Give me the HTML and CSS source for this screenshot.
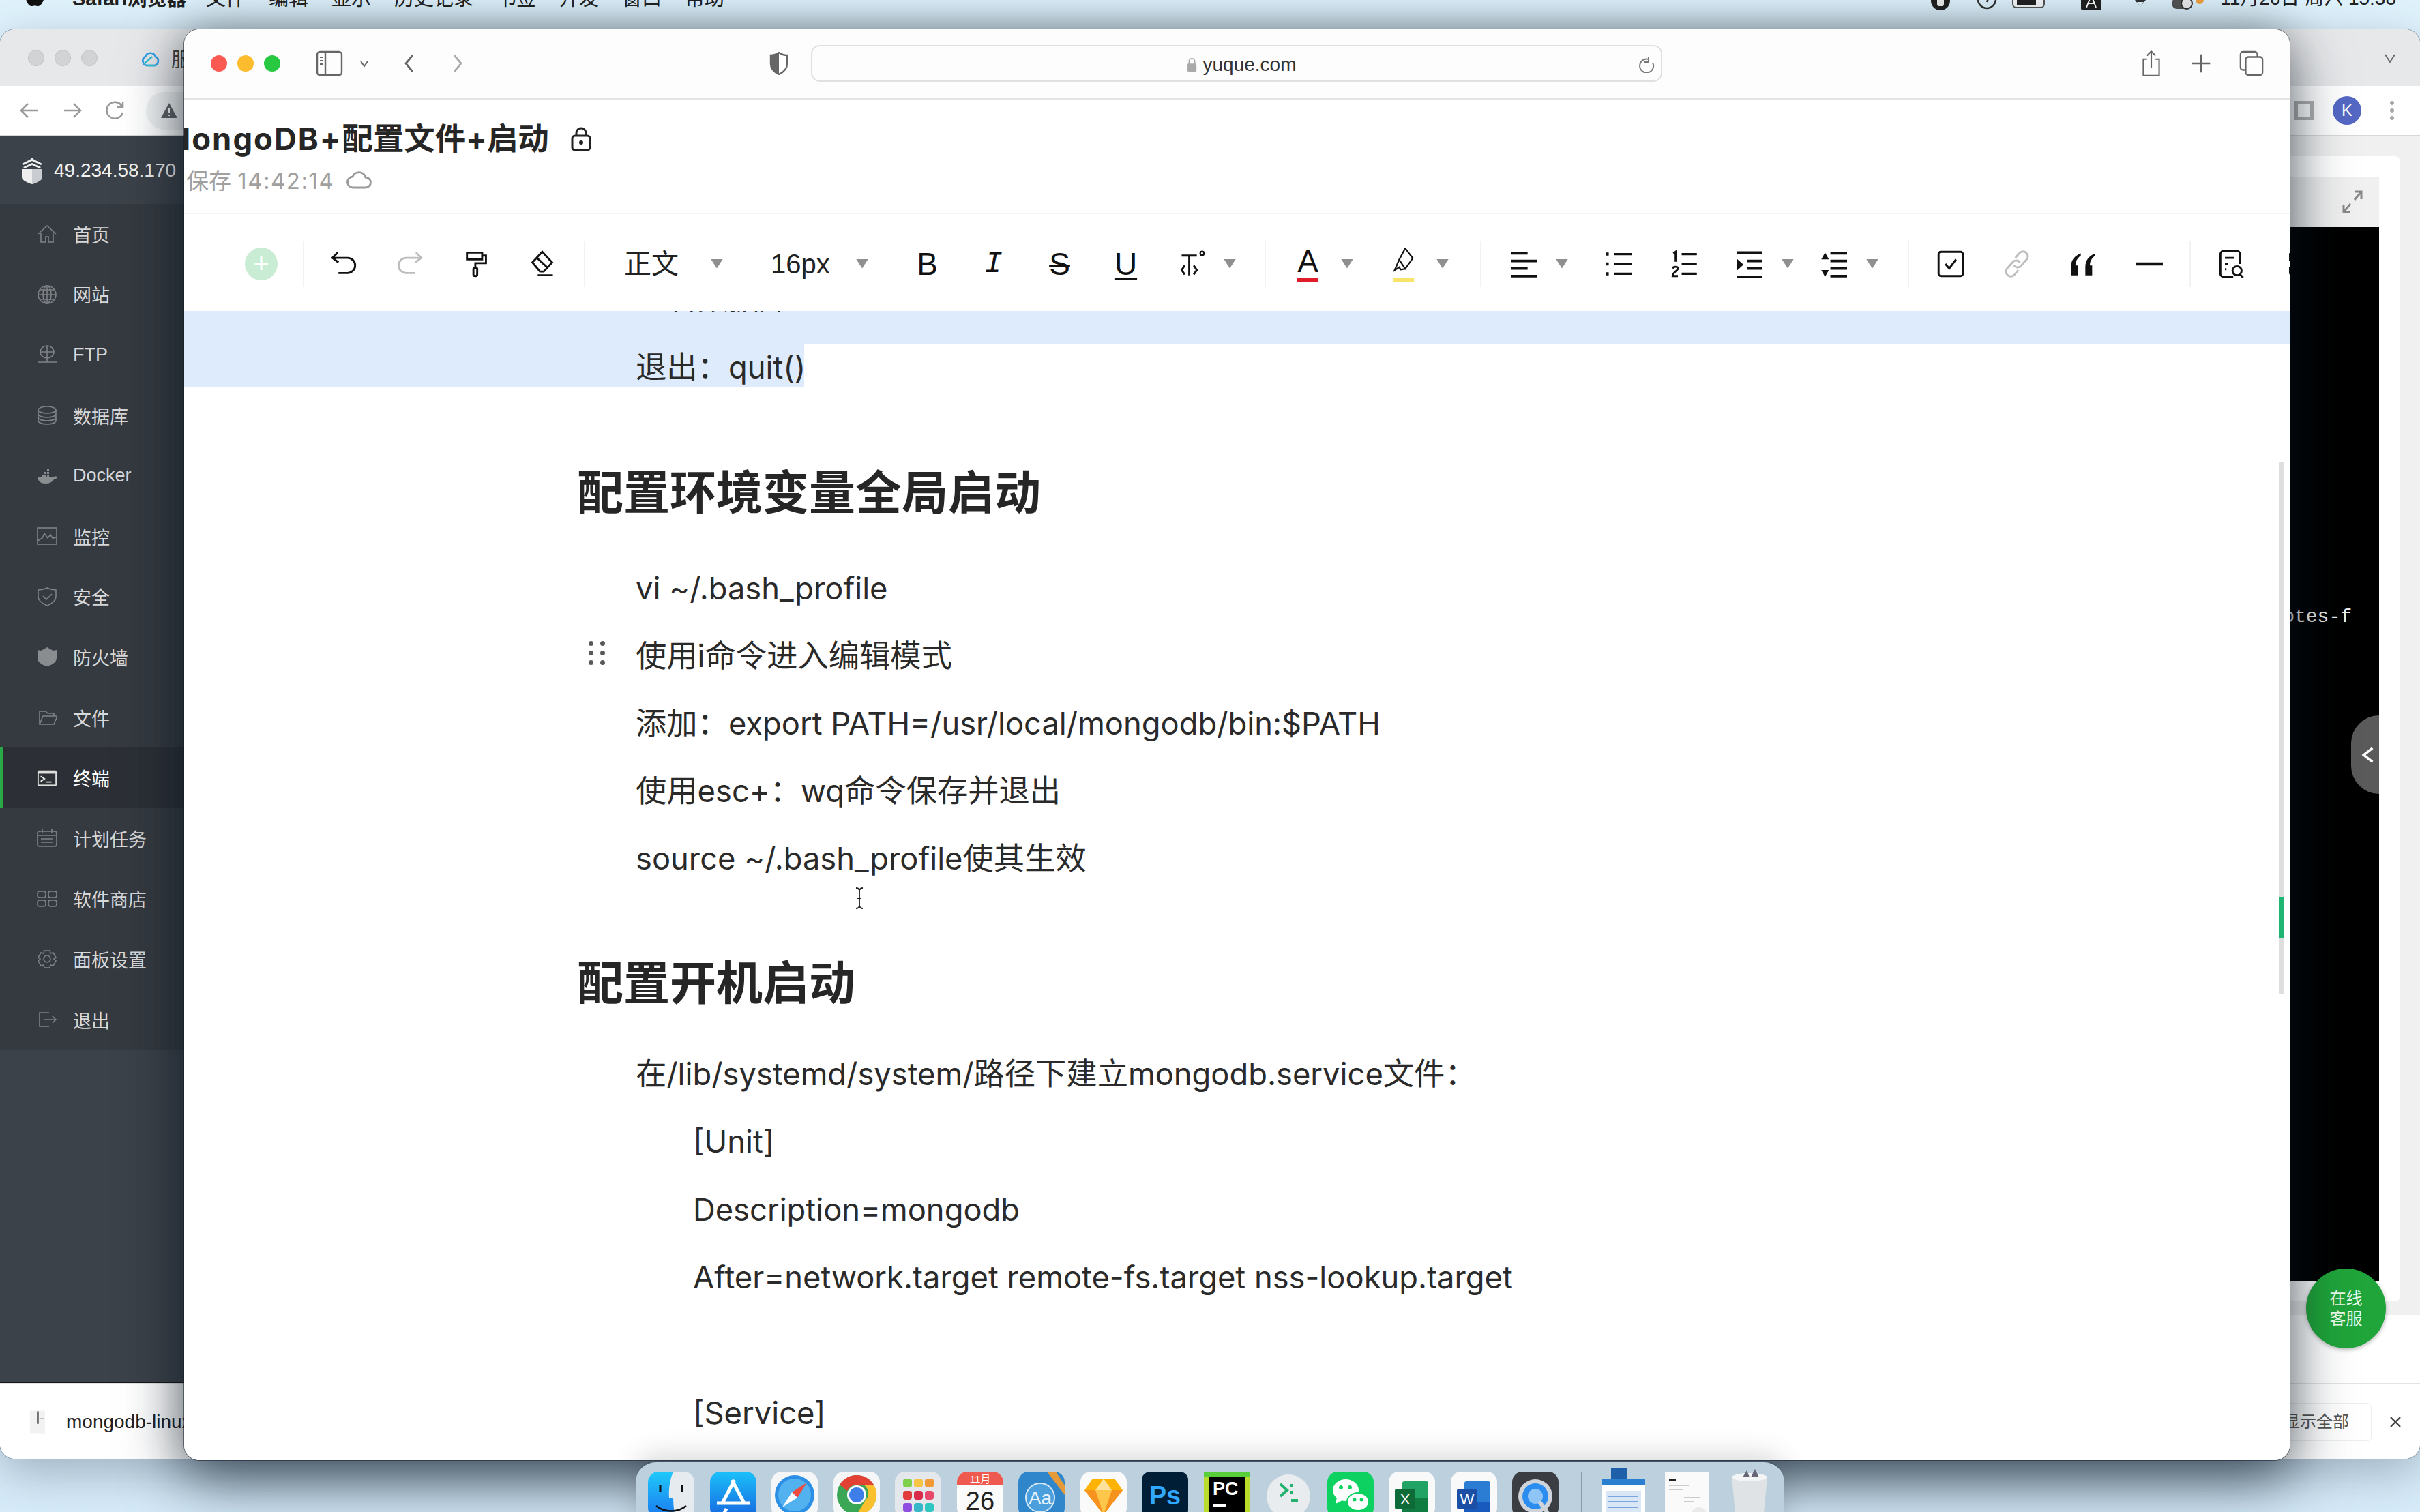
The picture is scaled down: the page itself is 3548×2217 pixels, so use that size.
FILE: index.html
```html
<!DOCTYPE html>
<html lang="zh-CN">
<head>
<meta charset="utf-8">
<title>MongoDB+配置文件+启动</title>
<link rel="stylesheet" href="styles.css">
</head>
<body>
<div class="desktop">

  <header class="menubar">
    <div class="menu-left">
      <svg class="apple" viewBox="0 0 36 40"><path d="M26 4c-3 0-6 2-7 5 3 0 6-2 7-5zM18 11c-2 0-4-1-7-1-5 0-9 4-9 11 0 8 5 17 10 17 2 0 4-1 6-1s4 1 6 1c4 0 8-6 10-12-4-2-6-5-6-8 0-3 2-5 4-6-2-2-5-3-7-3-3 0-5 2-7 2z"/></svg>
      <span class="menu-app">Safari浏览器</span>
      <span class="menu-item">文件</span>
      <span class="menu-item">编辑</span>
      <span class="menu-item">显示</span>
      <span class="menu-item">历史记录</span>
      <span class="menu-item">书签</span>
      <span class="menu-item">开发</span>
      <span class="menu-item">窗口</span>
      <span class="menu-item">帮助</span>
    </div>
    <div class="menu-right">
      <svg class="status" viewBox="0 0 36 36"><circle cx="18" cy="12" r="14" fill="#222"/><rect x="13" y="8" width="10" height="12" rx="3" fill="#eee"/></svg>
      <svg class="status st-2" viewBox="0 0 36 36"><circle cx="18" cy="10" r="13" fill="none" stroke="#333" stroke-width="2.500"/><path d="M18 14l5-12" stroke="#333" stroke-width="2.500"/></svg>
      <svg class="status wide st-3" viewBox="0 0 56 36"><rect x="2" y="-8" width="46" height="30" rx="5" fill="#f4f7f9" stroke="#555" stroke-width="2"/><rect x="8" y="-6" width="28" height="24" fill="#222"/></svg>
      <svg class="status st-4" viewBox="0 0 36 36"><rect x="4" y="-6" width="30" height="32" rx="3" fill="#222"/><path d="M12 22l7-18 7 18M14 16h10" stroke="#fff" fill="none" stroke-width="2"/></svg>
      <svg class="status st-5" viewBox="0 0 36 36"><path d="M18 21l-5-7h10zM6 6l12 15L30 6" fill="#333"/></svg>
      <svg class="status wider st-6" viewBox="0 0 50 36"><rect x="2" y="8" width="30" height="16" rx="8" fill="#555"/><circle cx="24" cy="16" r="8" fill="#eee" stroke="#333" stroke-width="2"/><circle cx="43" cy="11" r="6" fill="#f5a33d"/></svg>
      <span class="clock">11月26日 周六 15:38</span>
    </div>
  </header>

  <!-- back window: Chrome with the server panel -->
  <section class="win-back">
    <div class="tabbar">
      <span class="light-off"></span><span class="light-off"></span><span class="light-off"></span>
      <svg class="tab-cloud" viewBox="0 0 32 32"><path d="M11 27a7 7 0 0 1-2-13 8 8 0 0 1 15 0 7 7 0 0 1-1 13z" fill="none" stroke="#2f9fe8" stroke-width="2.6"/><path d="M7 25l12-11M12 27h12" fill="none" stroke="#2fc0d8" stroke-width="2.6"/></svg>
      <span class="tab-title">服务器</span>
      <svg class="tab-chevron" viewBox="0 0 20 20"><path d="M3 5l7 11 7-11" fill="none" stroke="#666" stroke-width="2"/></svg>
    </div>
    <div class="chrome-bar">
      <svg class="chrome-icon" viewBox="0 0 32 32"><path d="M28 16H4M14 6L4 16l10 10" fill="none" stroke="#9a9a9a" stroke-width="2.6"/></svg>
      <svg class="chrome-icon" viewBox="0 0 32 32"><path d="M4 16h24M18 6l10 10-10 10" fill="none" stroke="#9a9a9a" stroke-width="2.6"/></svg>
      <svg class="chrome-icon" viewBox="0 0 32 32"><path d="M26 10a12 12 0 1 0 1 9M27 3v8h-8" fill="none" stroke="#9a9a9a" stroke-width="2.6"/></svg>
      <div class="chrome-address">
        <svg class="warn" viewBox="0 0 26 26"><path d="M13 2l12 22H1z" fill="#5f6368"/><rect x="12" y="9" width="2" height="8" fill="#fff"/><rect x="12" y="19" width="2" height="2" fill="#fff"/></svg>
      </div>
      <svg class="chrome-square" viewBox="0 0 28 28"><rect x="2.500" y="2.500" width="23" height="23" fill="none" stroke="#b2b2b2" stroke-width="5"/></svg>
      <span class="avatar">K</span>
      <span class="chrome-dots"><i></i><i></i><i></i></span>
    </div>
    <div class="back-body">
      <nav class="sidebar">
        <div class="side-logo">
          <svg class="shield-logo" viewBox="0 0 34 40"><path d="M17 1l3 3 12 6-2 2-13-6-13 6-2-2 12-6zM17 9l13 6-2 2-11-5-11 5-2-2z" fill="#eee"/><path d="M2 18h30v12c0 4-8 8-15 10C10 38 2 34 2 30z" fill="#eee"/><path d="M17 18h15v12c0 4-8 8-15 10z" fill="#c9ccd0"/></svg>
          <span>49.234.58.170</span>
        </div>
        <ul class="side-menu">
          <li class="side-row"><svg class="side-icon" viewBox="0 0 30 30"><path d="M2 15L15 3l13 12M6 13v14h7v-8h4v8h7V13" /></svg><span>首页</span></li>
          <li class="side-row"><svg class="side-icon" viewBox="0 0 30 30"><circle cx="15" cy="15" r="13"/><ellipse cx="15" cy="15" rx="6" ry="13"/><path d="M2 15h26M4 8h22M4 22h22M15 2v26"/></svg><span>网站</span></li>
          <li class="side-row"><svg class="side-icon" viewBox="0 0 30 30"><ellipse cx="15" cy="11" rx="10" ry="9"/><path d="M5 11h20M15 2v18M1 26h28M15 20v6"/></svg><span>FTP</span></li>
          <li class="side-row"><svg class="side-icon" viewBox="0 0 30 30"><ellipse cx="15" cy="7" rx="13" ry="5"/><path d="M2 7v16c0 3 6 5 13 5s13-2 13-5V7M2 13c0 3 6 5 13 5s13-2 13-5M2 18c0 3 6 5 13 5s13-2 13-5"/></svg><span>数据库</span></li>
          <li class="side-row"><svg class="side-icon solid" viewBox="0 0 30 30"><path d="M1 17h22c2 0 3-1 3-2l4 1c-1 3-3 4-5 4-3 5-8 6-13 6-6 0-10-3-11-9z"/><path d="M7 13h3v3H7zM11 13h3v3h-3zM15 13h3v3h-3zM11 9h3v3h-3zM15 9h3v3h-3zM15 5h3v3h-3z"/></svg><span>Docker</span></li>
          <li class="side-row"><svg class="side-icon" viewBox="0 0 30 30"><rect x="1" y="3" width="28" height="24"/><path d="M1 22l7-4 3-7 5 7 4-5 3 5 6-1"/></svg><span>监控</span></li>
          <li class="side-row"><svg class="side-icon" viewBox="0 0 30 30"><path d="M2 5c5 0 9-1 13-3 4 2 8 3 13 3v10c0 6-6 10-13 13C8 25 2 21 2 15z"/><path d="M9 14l5 5 8-8"/></svg><span>安全</span></li>
          <li class="side-row"><svg class="side-icon solid" viewBox="0 0 30 30"><path d="M1 5l5 1 4-2 5-3 5 3 4 2 5-1v12c0 6-7 10-14 12C8 27 1 23 1 17z"/></svg><span>防火墙</span></li>
          <li class="side-row"><svg class="side-icon" viewBox="0 0 30 30"><path d="M4 25V6h9l3 3h9v4M4 25l5-12h21l-5 12z"/></svg><span>文件</span></li>
          <li class="side-row is-active"><svg class="side-icon active" viewBox="0 0 32 30"><rect x="1" y="3" width="30" height="24" rx="2" fill="#ddd" stroke="none"/><rect x="3" y="8" width="26" height="17" fill="#2e3237" stroke="none"/><path d="M6 12l6 4-6 4M14 21h9" stroke="#eee"/></svg><span>终端</span></li>
          <li class="side-row"><svg class="side-icon" viewBox="0 0 30 30"><rect x="1" y="5" width="28" height="22" rx="3"/><path d="M1 11h28M8 2v5M22 2v5M6 16h18M6 21h18"/></svg><span>计划任务</span></li>
          <li class="side-row"><svg class="side-icon" viewBox="0 0 30 30"><rect x="1" y="4" width="12" height="9" rx="3"/><rect x="17" y="4" width="12" height="9" rx="3"/><rect x="1" y="17" width="12" height="9" rx="3"/><rect x="17" y="17" width="12" height="9" rx="3"/></svg><span>软件商店</span></li>
          <li class="side-row"><svg class="side-icon" viewBox="0 0 30 30"><path d="M11 3h8l1 4 4-1 4 7-3 2 3 3-4 7-4-1-1 4h-8l-1-4-4 1-4-7 3-3-3-2 4-7 4 1z"/><circle cx="15" cy="15" r="5"/></svg><span>面板设置</span></li>
          <li class="side-row"><svg class="side-icon" viewBox="0 0 30 30"><path d="M18 5H4v20h14M10 15h18M23 10l5 5-5 5"/></svg><span>退出</span></li>
        </ul>
      </nav>
      <main class="panel-main">
        <div class="panel-area">
          <div class="panel">
            <div class="panel-head">
              <svg class="expand" viewBox="0 0 30 34"><path d="M18 2h10v11M28 2L18 14M12 32H2V21M2 32l10-12" fill="none" stroke="#888" stroke-width="3"/></svg>
            </div>
            <div class="terminal">
              <div class="term-line">otes-f</div>
              <div class="term-fold"><svg viewBox="0 0 24 30"><path d="M20 4L6 15l14 11" fill="none" stroke="#fff" stroke-width="4"/></svg></div>
            </div>
          </div>
        </div>
        <div class="panel-foot"></div>
      </main>
    </div>
    <div class="download-bar">
      <div class="dl-file">
        <svg class="zip" viewBox="0 0 24 36"><path d="M0 0h24v36H0z" fill="#f2f2f2"/><path d="M11 1h3v20h-3z" fill="#666"/><path d="M15 12h7" stroke="#bbb"/></svg>
        <span>mongodb-linux-x86_64</span>
      </div>
      <div class="dl-actions">
        <span class="dl-all">显示全部</span>
        <svg class="dl-close" viewBox="0 0 20 20"><path d="M3 3l14 14M17 3L3 17" stroke="#444" stroke-width="2.400"/></svg>
      </div>
    </div>
    <button class="chat-btn">在线<br>客服</button>
  </section>

  <!-- front window: Safari with the Yuque editor -->
  <section class="win-front">
    <div class="safari-bar">
      <span class="light red"></span><span class="light yellow"></span><span class="light green"></span>
      <svg class="sf-sidebar" viewBox="0 0 40 40"><rect x="2" y="3" width="36" height="34" rx="4" fill="none" stroke="#666" stroke-width="2.400"/><path d="M14 3v34" stroke="#666" stroke-width="2.400"/><path d="M6 11h4M6 16h4M6 21h4" stroke="#666" stroke-width="2"/></svg>
      <svg class="sf-caret" viewBox="0 0 16 16"><path d="M3 5l5 7 5-7" fill="none" stroke="#666" stroke-width="2"/></svg>
      <svg class="sf-nav" viewBox="0 0 20 30"><path d="M15 3L5 15l10 12" fill="none" stroke="#666" stroke-width="2.800"/></svg>
      <svg class="sf-nav next" viewBox="0 0 20 30"><path d="M5 3l10 12L5 27" fill="none" stroke="#aaa" stroke-width="2.800"/></svg>
      <svg class="sf-shield" viewBox="0 0 28 34"><path d="M14 1c4 3 8 4 12 4v13c0 7-6 12-12 15C8 30 2 25 2 18V5c4 0 8-1 12-4z" fill="#fff" stroke="#666" stroke-width="2.400"/><path d="M14 1C10 4 6 5 2 5v13c0 7 6 12 12 15z" fill="#666"/></svg>
      <div class="sf-address">
        <div class="sf-url">
          <svg class="sf-lock" viewBox="0 0 18 26"><path d="M4 12V7a5 5 0 0 1 10 0v5" fill="none" stroke="#aaa" stroke-width="2"/><rect x="1" y="11" width="16" height="14" rx="2" fill="#aaa"/></svg>
          <span>yuque.com</span>
        </div>
        <svg class="sf-reload" viewBox="0 0 26 26"><path d="M21 9a10 10 0 1 1-6-5M15 0v8h-6" transform="translate(1 2)" fill="none" stroke="#777" stroke-width="2"/></svg>
      </div>
      <svg class="sf-act act-share" viewBox="0 0 36 44"><path d="M11 15H5v27h26V15h-6M18 30V3M11 9l7-7 7 7" fill="none" stroke="#666" stroke-width="2.400"/></svg>
      <svg class="sf-act act-plus" viewBox="0 0 36 36"><path d="M18 3v30M3 18h30" stroke="#666" stroke-width="2.600"/></svg>
      <svg class="sf-act act-tabs" viewBox="0 0 40 40"><rect x="3" y="2" width="26" height="28" rx="4" fill="none" stroke="#666" stroke-width="2.400"/><rect x="11" y="10" width="26" height="28" rx="4" fill="#fdfdfe" stroke="#666" stroke-width="2.400"/></svg>
    </div>

    <div class="doc-head">
      <div class="doc-title">
        <h1><span class="title-latin">MongoDB+</span>配置文件+启动</h1>
        <svg class="doc-lock" viewBox="0 0 30 36"><rect x="2" y="13" width="26" height="21" rx="4" fill="none" stroke="#222" stroke-width="3"/><path d="M8 13V9a7 7 0 0 1 14 0v4" fill="none" stroke="#222" stroke-width="3"/><circle cx="15" cy="23" r="3" fill="#222"/></svg>
      </div>
      <div class="doc-save">
        <span>保存 <span class="save-time">14:42:14</span></span>
        <svg class="doc-cloud" viewBox="0 0 38 30"><path d="M10 27a8 8 0 0 1-1-16 10 10 0 0 1 19 1 7.500 7.500 0 0 1 0 15z" fill="none" stroke="#999" stroke-width="2.800"/></svg>
      </div>
    </div>

    <div class="toolbar">
      <span class="tb-plus ml-89">+</span>
      <i class="tb-sep ml-37"></i>
      <span class="tb-btn ml-9"><svg viewBox="0 0 36 36"><path d="M10 3L3 10l8 6M3 10h20a9 9 0 0 1 0 20H11"/></svg></span>
      <span class="tb-btn off"><svg viewBox="0 0 36 36"><path d="M26 3l7 7-8 6M33 10H13a9 9 0 0 0 0 20h12"/></svg></span>
      <span class="tb-btn"><svg viewBox="0 0 36 36"><path d="M6 3h20v9H6zM26 7h5v10H17v6"/><rect x="14.500" y="23" width="5" height="11" rx="2"/></svg></span>
      <span class="tb-btn"><svg viewBox="0 0 36 36"><path d="M18 2l13 14-11 12h-5L5 16zM11 10l14 13M12 33h20"/></svg></span>
      <i class="tb-sep ml-13"></i>
      <span class="tb-select sel-style ml-57">正文</span><i class="tb-caret ml-47"></i>
      <span class="tb-select sel-size ml-70">16px</span><i class="tb-caret ml-36"></i>
      <span class="tb-btn tb-letter ml-38">B</span>
      <span class="tb-btn tb-letter tb-i">I</span>
      <span class="tb-btn tb-letter tb-s">S</span>
      <span class="tb-btn tb-letter tb-u">U</span>
      <span class="tb-btn"><svg viewBox="0 0 36 36"><path d="M4 7h20M14 7v26M8 20l-4 6 4 6M20 20l4 6-4 6"/><circle cx="31" cy="4" r="2.500" stroke-width="2"/></svg></span>
      <i class="tb-caret ml-n2"></i>
      <i class="tb-sep ml-42"></i>
      <span class="tb-btn tb-color ml-13"><span class="tb-a">A</span><i class="swatch red-swatch"></i></span><i class="tb-caret"></i>
      <span class="tb-btn ml-25 tb-color"><svg viewBox="0 0 36 36"><path d="M20 1l10 13-10 14-8-12zM12 16l-6 14 6-4 2 3 6-1"/></svg><i class="swatch yellow-swatch"></i></span><i class="tb-caret"></i>
      <i class="tb-sep ml-46"></i>
      <span class="tb-btn ml-12"><svg viewBox="0 0 36 36"><path d="M2 4h22M2 14h34M2 24h22M2 34h34" stroke-width="3.400"/></svg></span><i class="tb-caret"></i>
      <span class="tb-btn ml-25"><svg viewBox="0 0 36 36"><path d="M12 5h24M12 18h24M12 31h24" stroke-width="3"/><path d="M1 5h4M1 18h4M1 31h4" stroke-width="4"/></svg></span>
      <span class="tb-btn"><svg viewBox="0 0 36 36"><path d="M14 5h20M14 18h20M14 31h20" stroke-width="3"/><path d="M3 4l3-2v13M2 24c1-3 7-3 7 0s-7 5-7 10h7" stroke-width="2.600"/></svg></span>
      <span class="tb-btn ml-n3"><svg viewBox="0 0 36 36"><path d="M2 3h34M16 14h20M16 24h20M2 35h34" stroke-width="3.400"/><path d="M2 11l9 8-9 8z" fill="#111" stroke="none"/></svg></span><i class="tb-caret"></i>
      <span class="tb-btn ml-9"><svg viewBox="0 0 36 36"><path d="M14 4h22M14 14h22M14 24h22M14 34h22" stroke-width="3.400"/><path d="M2 12l5-9 5 9zM2 26l5 9 5-9z" fill="#111" stroke="none"/></svg></span><i class="tb-caret"></i>
      <i class="tb-sep ml-43"></i>
      <span class="tb-btn ml-12"><svg viewBox="0 0 36 36"><rect x="2" y="2" width="32" height="32" rx="3"/><path d="M11 18l5 6 9-12"/></svg></span>
      <span class="tb-btn off"><svg viewBox="0 0 36 36"><path d="M16 10l5-6a6 6 0 0 1 10 8l-8 9a6 6 0 0 1-9-1M20 26l-5 6a6 6 0 0 1-10-8l8-9a6 6 0 0 1 9 1"/></svg></span>
      <span class="tb-btn"><svg viewBox="0 0 36 36"><path d="M15 4C7 7 2 13 2 22v11h9V20H8c0-6 3-10 7-13zM34 4c-8 3-13 9-13 18v11h9V20h-3c0-6 3-10 7-13z" fill="#111" stroke="none"/></svg></span>
      <span class="tb-btn"><svg viewBox="0 0 36 36"><path d="M0 18h36" stroke-width="4"/></svg></span>
      <i class="tb-sep ml-11"></i>
      <span class="tb-btn ml-11"><svg viewBox="0 0 36 36"><path d="M20 35H7a4 4 0 0 1-4-4V5a4 4 0 0 1 4-4h18a4 4 0 0 1 4 4v13M9 10h12M9 18h4M9 25h2"/><circle cx="25" cy="27" r="6"/><path d="M29 32l4 4"/></svg></span>
      <span class="tb-clip"><svg viewBox="0 0 36 36"><path d="M7 3h30M7 3v10h10M7 22v8a4 4 0 0 0 4 4"/></svg></span>
    </div>

    <div class="doc-body">
      <div class="sel-prev"><p class="line">查看数据库</p></div>
      <p class="line sel-row">退出：quit()</p>

      <h2 class="heading first-h">配置环境变量全局启动</h2>
      <p class="line">vi ~/.bash_profile</p>
      <p class="line">使用i命令进入编辑模式</p>
      <p class="line">添加：export PATH=/usr/local/mongodb/bin:$PATH</p>
      <p class="line">使用esc+：wq命令保存并退出</p>
      <p class="line">source ~/.bash_profile使其生效</p>

      <h2 class="heading second-h">配置开机启动</h2>
      <p class="line tall">在/lib/systemd/system/路径下建立mongodb.service文件：</p>
      <p class="line tall indent">[Unit]</p>
      <p class="line tall indent">Description=mongodb</p>
      <p class="line tall indent">After=network.target remote-fs.target nss-lookup.target</p>
      <p class="line tall indent">&nbsp;</p>
      <p class="line tall indent">[Service]</p>

      <div class="drag-handle"><i></i><i></i><i></i><i></i><i></i><i></i></div>
      <svg class="ibeam" viewBox="0 0 14 32"><path d="M2 1c2 0 4 1 5 3 1-2 3-3 5-3M7 4v24M2 31c2 0 4-1 5-3 1 2 3 3 5 3M4 16h6" fill="none" stroke="#222" stroke-width="1.800"/></svg>
    </div>
    <div class="scroll-track"><i class="scroll-mark"></i></div>
  </section>

  <!-- dock -->
  <footer class="dock">
    <svg class="dock-icon" viewBox="0 0 68 68"><defs><linearGradient id="fd" x1="0" y1="0" x2="0" y2="1"><stop offset="0" stop-color="#20c9fb"/><stop offset="1" stop-color="#1a78ee"/></linearGradient></defs><rect width="68" height="68" rx="15" fill="#e6ebf0"/><path d="M15 0h22c-5 12-7 25-6 38h6c0 10 1 20 3 30H15A15 15 0 0 1 0 53V15A15 15 0 0 1 15 0z" fill="url(#fd)"/><path d="M18 20v9M50 20v9" stroke="#111" stroke-width="3"/><path d="M12 50c12 10 32 10 44 0" fill="none" stroke="#111" stroke-width="2.500"/></svg>
    <svg class="dock-icon" viewBox="0 0 68 68"><defs><linearGradient id="as" x1="0" y1="0" x2="0" y2="1"><stop offset="0" stop-color="#1cc0fa"/><stop offset="1" stop-color="#1666e0"/></linearGradient></defs><rect width="68" height="68" rx="15" fill="url(#as)"/><path d="M36 12L18 46M32 12l18 34M10 46h48M24 54l-4 8" stroke="#fff" stroke-width="5" fill="none"/></svg>
    <svg class="dock-icon" viewBox="0 0 68 68"><rect width="68" height="68" rx="15" fill="#f5f6f8"/><circle cx="34" cy="34" r="29" fill="#2b8fe6"/><circle cx="34" cy="34" r="24" fill="#52b2f0"/><path d="M52 16L30 30l8 8z" fill="#f04a3e"/><path d="M16 52l14-22 8 8z" fill="#fff"/></svg>
    <svg class="dock-icon" viewBox="0 0 68 68"><rect width="68" height="68" rx="15" fill="#f5f6f8"/><circle cx="34" cy="34" r="29" fill="#3aa757"/><path d="M34 5a29 29 0 0 1 25 14H34a15 15 0 0 0-14 9L9 19A29 29 0 0 1 34 5z" fill="#e34133"/><path d="M59 19a29 29 0 0 1-25 44l12-20a15 15 0 0 0-2-24z" fill="#fbc02d"/><circle cx="34" cy="34" r="14" fill="#fff"/><circle cx="34" cy="34" r="11" fill="#3f7ee8"/></svg>
    <svg class="dock-icon" viewBox="0 0 68 68"><rect width="68" height="68" rx="15" fill="#e4e8ec"/><rect x="12" y="10" width="13" height="13" rx="4" fill="#7ed04b"/><rect x="28" y="10" width="13" height="13" rx="4" fill="#f6c545"/><rect x="44" y="10" width="13" height="13" rx="4" fill="#f19a38"/><rect x="12" y="28" width="13" height="13" rx="4" fill="#e23b3b"/><rect x="28" y="28" width="13" height="13" rx="4" fill="#d82c4a"/><rect x="44" y="28" width="13" height="13" rx="4" fill="#e8486a"/><rect x="12" y="46" width="13" height="13" rx="4" fill="#8e4ee0"/><rect x="28" y="46" width="13" height="13" rx="4" fill="#35b7c9"/><rect x="44" y="46" width="13" height="13" rx="4" fill="#2fc7c0"/></svg>
    <svg class="dock-icon" viewBox="0 0 68 68"><rect width="68" height="68" rx="15" fill="#fbfbfb"/><path d="M0 20V15A15 15 0 0 1 15 0h38a15 15 0 0 1 15 15v5z" fill="#ef5a50"/><text class="dock-text" x="34" y="16" text-anchor="middle" font-size="15" fill="#fff">11月</text><text class="dock-text" x="34" y="56" text-anchor="middle" font-size="38" fill="#222">26</text></svg>
    <svg class="dock-icon" viewBox="0 0 68 68"><rect width="68" height="68" rx="15" fill="#2f86cb"/><path d="M42 0h13l13 20v14z" fill="#e69a3a"/><circle cx="32" cy="38" r="21" fill="#4b9fdc" stroke="#d5e8f5" stroke-width="2"/><text class="dock-text" x="32" y="48" text-anchor="middle" font-size="28" fill="#e8f3fb">Aa</text></svg>
    <svg class="dock-icon" viewBox="0 0 68 68"><rect width="68" height="68" rx="15" fill="#fafafa"/><path d="M18 10h32l12 17-28 36L6 27z" fill="#fdb300"/><path d="M6 27h56L34 63z" fill="#f6921e"/><path d="M22 27h24L34 63z" fill="#fdc74c"/><path d="M34 10l-12 17h24z" fill="#fee19a"/></svg>
    <svg class="dock-icon" viewBox="0 0 68 68"><rect width="68" height="68" rx="12" fill="#001e36"/><text class="dock-text strong" x="34" y="48" text-anchor="middle" font-size="38" fill="#31a8ff">Ps</text></svg>
    <svg class="dock-icon" viewBox="0 0 68 68"><rect width="68" height="68" fill="#b9dc2c"/><path d="M0 0h68v8H0z" fill="#58cf3a"/><rect x="7" y="7" width="54" height="54" fill="#000"/><text class="dock-text strong" x="13" y="34" font-size="27" fill="#fff">PC</text><rect x="13" y="48" width="20" height="4" fill="#fff"/></svg>
    <svg class="dock-icon" viewBox="0 0 68 68"><circle cx="34" cy="36" r="32" fill="#e9ecee"/><path d="M22 18l10 9-10 9M38 42h10M38 18v4M38 28v4" fill="none" stroke="#23b26d" stroke-width="4"/></svg>
    <svg class="dock-icon" viewBox="0 0 68 68"><rect width="68" height="68" rx="15" fill="#0dd161"/><ellipse cx="27" cy="27" rx="19" ry="16" fill="#fff"/><path d="M14 38l-2 9 10-5z" fill="#fff"/><ellipse cx="45" cy="44" rx="16" ry="13" fill="#fff" stroke="#0dd161" stroke-width="2"/><circle cx="20" cy="23" r="3" fill="#0dd161"/><circle cx="33" cy="23" r="3" fill="#0dd161"/><circle cx="40" cy="41" r="2.500" fill="#0dd161"/><circle cx="50" cy="41" r="2.500" fill="#0dd161"/></svg>
    <svg class="dock-icon" viewBox="0 0 68 68"><rect width="68" height="68" rx="15" fill="#f9f9f9"/><rect x="20" y="14" width="38" height="50" rx="3" fill="#21a366"/><path d="M20 38h38v26H20z" fill="#107c41"/><rect x="9" y="25" width="30" height="30" rx="3" fill="#0e6b37"/><text class="dock-text" x="24" y="48" text-anchor="middle" font-size="22" fill="#fff">X</text></svg>
    <svg class="dock-icon" viewBox="0 0 68 68"><rect width="68" height="68" rx="15" fill="#f9f9f9"/><rect x="20" y="14" width="38" height="50" rx="3" fill="#2b7cd3"/><path d="M20 44h38v20H20z" fill="#185abd"/><rect x="9" y="25" width="30" height="30" rx="3" fill="#1a4fa5"/><text class="dock-text" x="24" y="48" text-anchor="middle" font-size="22" fill="#fff">W</text></svg>
    <svg class="dock-icon" viewBox="0 0 68 68"><rect width="68" height="68" rx="15" fill="#3a3d42"/><circle cx="34" cy="36" r="25" fill="#cfd4da"/><circle cx="34" cy="36" r="19" fill="#2b8df0"/><circle cx="34" cy="36" r="11" fill="#8fc4f6"/><path d="M40 44l12 16" stroke="#cfd4da" stroke-width="6"/></svg>
    <i class="dock-sep"></i>
    <svg class="dock-doc doc-a" viewBox="0 0 68 76"><path d="M16 0h24v16H16z" fill="#1d5fa8"/><path d="M2 16h64v14H2z" fill="#2a7fd0"/><rect x="2" y="26" width="64" height="50" fill="#fff"/><rect x="8" y="34" width="52" height="42" fill="#d8e6f6"/><path d="M12 42h44M12 50h44M12 58h44" stroke="#7aa6dc" stroke-width="2"/></svg>
    <svg class="dock-doc doc-b" viewBox="0 0 68 76"><rect x="2" y="6" width="64" height="70" fill="#fafafa"/><path d="M8 18h10" stroke="#222" stroke-width="3"/><path d="M8 26h30M8 32h20M30 44h24M30 50h14" stroke="#ccc" stroke-width="2"/><circle cx="52" cy="70" r="12" fill="#eaeaea"/></svg>
    <svg class="dock-doc doc-c" viewBox="0 0 68 76"><path d="M8 14h52l-6 62H14z" fill="#dfe3e6"/><ellipse cx="34" cy="14" rx="26" ry="6" fill="#f2f4f5"/><path d="M24 14l6-10 4 10M36 14l6-12 6 12" fill="#667"/></svg>
  </footer>
</div>
</body>
</html>
```
FILE: styles.css
```css
* { box-sizing: border-box; }
html, body { margin: 0; padding: 0; }
body {
  width: 3548px;
  height: 2217px;
  overflow: hidden;
  font-family: "Liberation Sans", "Noto Sans CJK SC", sans-serif;
  background: #dceefb;
}
.desktop {
  position: relative;
  width: 3548px;
  height: 2217px;
  overflow: hidden;
  background: linear-gradient(#e0f3fd 0, #e0f3fd 60%, #d8ecfa 100%);
}
i { display: block; font-style: normal; }
svg { display: block; flex: none; }

/* menu bar */
.menubar {
  height: 42px;
  display: flex;
  justify-content: space-between;
  font-size: 29px;
  line-height: 30px;
  color: #222;
}
.menu-left, .menu-right { display: flex; align-items: flex-start; margin-top: -17px; }
.menu-left { padding-left: 36px; }
.apple { width: 30px; height: 34px; margin-top: -6px; fill: #111; }
.menu-app { margin-left: 40px; font-weight: 700; width: 196px; }
.menu-item { margin-right: 34px; }
.menu-right { padding-right: 35px; }
.status { width: 44px; height: 36px; margin-top: 6px; }
.status.wide { width: 56px; }
.status.wider { width: 50px; }
.st-2 { margin-left: 24px; }
.st-3 { margin-left: 14px; }
.st-4 { margin-left: 38px; }
.st-5 { margin-left: 29px; }
.st-6 { margin-left: 22px; }
.clock { margin-left: 23px; font-size: 28px; }

/* back window */
.win-back {
  position: absolute;
  left: 0;
  top: 43px;
  width: 3548px;
  height: 2096px;
  border-radius: 22px;
  overflow: hidden;
  display: flex;
  flex-direction: column;
  background: #fff;
  box-shadow: 0 0 0 1px rgba(90,110,125,.55), 0 20px 70px rgba(40,60,80,.35);
}
.tabbar {
  height: 83px;
  background: #e7e8ea;
  display: flex;
  align-items: center;
  padding-left: 41px;
  gap: 15px;
  flex: none;
}
.light-off { width: 24px; height: 24px; border-radius: 50%; background: #d2d3d5; border: 1px solid #c2c3c5; }
.tab-cloud { width: 32px; height: 32px; margin-left: 46px; }
.tab-title { font-size: 29px; color: #444; }
.tab-chevron { width: 20px; height: 20px; margin-left: auto; margin-right: 34px; }
.chrome-bar {
  height: 74px;
  flex: none;
  background: #fff;
  display: flex;
  align-items: center;
  padding-left: 27px;
  padding-right: 38px;
  gap: 31px;
  border-bottom: 2px solid #d8d8d8;
}
.chrome-icon { width: 32px; height: 32px; }
.chrome-address {
  flex: 1;
  height: 55px;
  margin-left: -2px;
  border-radius: 28px;
  background: #f1f3f4;
  display: flex;
  align-items: center;
  padding-left: 21px;
}
.warn { width: 26px; height: 26px; }
.chrome-square { width: 28px; height: 28px; }
.avatar {
  width: 42px;
  height: 42px;
  border-radius: 50%;
  background: #5468c4;
  color: #fff;
  font-size: 24px;
  text-align: center;
  line-height: 42px;
  margin-left: -3px;
}
.chrome-dots { display: flex; flex-direction: column; gap: 5px; margin-left: 11px; }
.chrome-dots i { width: 6px; height: 6px; border-radius: 50%; background: #a8a8a8; }

.back-body { flex: 1; display: flex; min-height: 0; }
.sidebar {
  width: 270px;
  flex: none;
  background: #3c4249;
  border-bottom: 2px solid #15181b;
  border-top: 1px solid #15181b;
  margin-top: -1px;
}
.side-logo {
  height: 99px;
  display: flex;
  align-items: center;
  padding-left: 30px;
  gap: 15px;
  color: #f1f1f1;
  font-size: 28px;
}
.shield-logo { width: 34px; height: 40px; }
.side-menu { margin: 0; padding: 0; list-style: none; background: #353a40; }
.side-row {
  height: 88.6px;
  display: flex;
  align-items: center;
  padding-left: 54px;
  gap: 23px;
  color: #d5d7d9;
  font-size: 27px;
}
.side-row.is-active {
  background: #2c3036;
  color: #fff;
  box-shadow: inset 5px 0 0 #28a745;
}
.side-icon { width: 30px; height: 30px; fill: none; stroke: #7f8387; stroke-width: 1.600; }
.side-icon.solid { fill: #8a8d90; stroke: none; }
.side-icon.active { stroke-width: 2; }

.panel-main { flex: 1; display: flex; flex-direction: column; min-width: 0; }
.panel-area { flex: 1; background: #f0f0f0; padding: 29px 30px 20px 0; display: flex; min-height: 0; }
.panel {
  flex: 1;
  background: #fff;
  border-radius: 6px;
  padding: 30px 30px 30px 0;
  display: flex;
  flex-direction: column;
}
.panel-head {
  height: 74px;
  background: #f0f0f0;
  display: flex;
  align-items: center;
  justify-content: flex-end;
  padding-right: 24px;
  flex: none;
}
.expand { width: 30px; height: 34px; }
.terminal { flex: 1; background: #000; position: relative; overflow: hidden; }
.term-line {
  position: absolute;
  right: 40px;
  top: 556px;
  font-family: "Liberation Mono", monospace;
  font-size: 28px;
  line-height: 32px;
  color: #eee;
}
.term-fold {
  position: absolute;
  right: 0;
  top: 716px;
  width: 41px;
  height: 115px;
  background: #5a5a5a;
  border-radius: 58px 0 0 58px / 58px 0 0 58px;
  display: flex;
  align-items: center;
  justify-content: flex-end;
  padding-right: 6px;
}
.term-fold svg { width: 22px; height: 28px; }
.panel-foot { height: 100px; background: #fff; flex: none; }

.download-bar {
  height: 111px;
  flex: none;
  background: #fff;
  border-top: 2px solid #e4e4e4;
  display: flex;
  align-items: center;
  justify-content: space-between;
  padding: 0 26px 0 44px;
}
.dl-file { display: flex; align-items: center; gap: 31px; font-size: 28px; color: #222; }
.zip { width: 22px; height: 34px; }
.dl-actions { display: flex; align-items: center; gap: 25px; }
.dl-all {
  font-size: 24px;
  color: #555;
  height: 56px;
  line-height: 54px;
  padding: 0 32px 0 30px;
  border: 1px solid #eee;
  border-radius: 6px;
}
.dl-close { width: 20px; height: 20px; }
.chat-btn {
  position: absolute;
  left: 3381px;
  top: 1817px;
  width: 117px;
  height: 117px;
  border: 0;
  border-radius: 50%;
  background: #20a53a;
  color: #eafbe9;
  font-family: inherit;
  font-size: 24px;
  line-height: 30px;
  padding: 0;
  box-shadow: 0 2px 6px rgba(0,0,0,.3);
}

/* front window */
.win-front {
  position: absolute;
  z-index: 2;
  left: 270px;
  top: 43px;
  width: 3087px;
  height: 2098px;
  border-radius: 22px;
  overflow: hidden;
  display: flex;
  flex-direction: column;
  background: #fff;
  box-shadow: 0 0 0 1px rgba(20,30,40,.55), 0 30px 90px rgba(10,25,40,.6), -4px 0 60px rgba(0,0,0,.25);
}
.safari-bar {
  height: 103px;
  flex: none;
  background: #fdfdfe;
  border-bottom: 3px solid #e3e3e5;
  display: flex;
  align-items: center;
  padding-left: 39px;
  gap: 15px;
}
.light { width: 24px; height: 24px; border-radius: 50%; }
.light.red { background: #fb5a52; }
.light.yellow { background: #fdbb2e; }
.light.green { background: #28c840; }
.sf-sidebar { width: 40px; height: 40px; margin-left: 37px; }
.sf-caret { width: 16px; height: 16px; margin-left: 8px; }
.sf-nav { width: 20px; height: 30px; margin-left: 33px; }
.sf-nav.next { margin-left: 36px; }
.sf-shield { width: 28px; height: 34px; margin-left: 432px; }
.sf-address {
  width: 1248px;
  height: 54px;
  margin-left: 18px;
  border: 2px solid #e0e0e2;
  border-radius: 13px;
  background: #fdfdfe;
  display: flex;
  align-items: center;
  justify-content: center;
  position: relative;
}
.sf-url { display: flex; align-items: center; gap: 9px; font-size: 28px; color: #333; padding-left: 14px; padding-top: 4px; }
.sf-lock { width: 15px; height: 24px; }
.sf-reload { position: absolute; right: 8px; top: 13px; width: 26px; height: 26px; }
.sf-act { height: 40px; }
.act-share { width: 32px; height: 44px; margin-left: 686px; }
.act-plus { width: 32px; height: 32px; margin-left: 26px; }
.act-tabs { width: 38px; height: 38px; margin-left: 24px; }

.doc-head { height: 168px; flex: none; background: #fff; border-bottom: 2px solid #f3f3f3; padding-top: 26px; }
.doc-title { display: flex; align-items: center; margin-left: -33px; height: 64px; }
.doc-title h1 { margin: 0; font-family: Inter, "Noto Sans CJK SC", sans-serif; font-size: 45.400px; font-weight: 700; color: #262626; line-height: 64px; white-space: nowrap; }
.title-latin { letter-spacing: 2px; }
.doc-lock { width: 30px; height: 36px; margin-left: 32px; }
.doc-save { display: flex; align-items: center; gap: 18px; padding-left: 3px; margin-top: 2px; height: 50px; font-family: Inter, "Noto Sans CJK SC", sans-serif; font-size: 33px; color: #a0a0a0; }
.save-time { letter-spacing: 1.500px; }
.doc-cloud { width: 38px; height: 30px; }

.toolbar {
  height: 142px;
  flex: none;
  display: flex;
  align-items: center;
  padding-top: 3px;
  background: #fff;
  overflow: hidden;
  position: relative;
}
.tb-plus {
  width: 48px;
  height: 48px;
  border-radius: 50%;
  background: #c9ecd5;
  color: #fff;
  font-size: 40px;
  line-height: 46px;
  text-align: center;
  flex: none;
}
.tb-sep { width: 2px; height: 68px; background: #f2f2f2; flex: none; }
.tb-btn {
  width: 97px;
  height: 60px;
  flex: none;
  display: flex;
  align-items: center;
  justify-content: center;
  color: #111;
  position: relative;
}
.tb-btn svg { width: 40px; height: 40px; fill: none; stroke: #111; stroke-width: 2.600; }
.tb-btn.off svg { stroke: #bdbdbd; }
.tb-letter { font-size: 46px; line-height: 60px; }
.tb-i { font-family: "Liberation Mono", monospace; font-style: italic; font-size: 44px; }
.tb-s { text-decoration: line-through; text-decoration-thickness: 3px; }
.tb-u { text-decoration: underline; text-decoration-thickness: 4px; text-underline-offset: 4px; }
.tb-a { font-size: 46px; line-height: 48px; margin-top: -8px; }
.tb-color svg { margin-top: -8px; stroke-width: 2; }
.swatch { position: absolute; left: 33px; top: 50px; width: 31px; height: 6px; }
.red-swatch { background: #e01b2a; }
.yellow-swatch { background: #f7e46a; }
.tb-caret {
  width: 18px;
  height: 14px;
  flex: none;
  background: #8f8f8f;
  clip-path: polygon(0 0, 100% 0, 50% 100%);
}
.tb-select { flex: none; font-size: 40px; color: #222; line-height: 60px; white-space: nowrap; }
.sel-style { width: 80px; }
.sel-size { width: 89px; }
.tb-clip { flex: none; width: 40px; height: 38px; margin-left: 30px; }
.tb-clip svg { width: 38px; height: 38px; fill: none; stroke: #111; stroke-width: 2.600; }
.ml-9 { margin-left: 9px; }
.ml-11 { margin-left: 11px; }
.ml-12 { margin-left: 12px; }
.ml-13 { margin-left: 13px; }
.ml-25 { margin-left: 25px; }
.ml-36 { margin-left: 36px; }
.ml-37 { margin-left: 37px; }
.ml-38 { margin-left: 38px; }
.ml-42 { margin-left: 42px; }
.ml-43 { margin-left: 43px; }
.ml-46 { margin-left: 46px; }
.ml-47 { margin-left: 47px; }
.ml-57 { margin-left: 57px; }
.ml-70 { margin-left: 70px; }
.ml-89 { margin-left: 89px; }
.ml-n2 { margin-left: -2px; }
.ml-n3 { margin-left: -3px; }

.doc-body { flex: 1; position: relative; overflow: hidden; background: #fff; min-height: 0; font-family: Inter, "Noto Sans CJK SC", sans-serif; font-size: 45.300px; color: #2a2a2a; }
.line { margin: 0; height: 99px; line-height: 99px; padding-left: 662px; white-space: nowrap; }
.line.tall { height: 99.400px; }
.indent { padding-left: 746px; }
.sel-prev { height: 49px; background: #deebfc; overflow: hidden; }
.sel-prev .line { margin-top: -68px; }
.line.sel-row { width: 909px; height: 63px; line-height: 67px; background: #deebfc; }
.heading { margin: 0; height: 100px; line-height: 100px; padding-left: 576px; font-size: 68px; font-weight: 700; color: #262626; }
.first-h { margin-top: 104px; margin-bottom: 41px; }
.second-h { margin-top: 83px; margin-bottom: 34px; }
.drag-handle {
  position: absolute;
  left: 593px;
  top: 484px;
  display: grid;
  grid-template-columns: 7px 7px;
  column-gap: 10px;
  row-gap: 7px;
}
.drag-handle i { width: 7px; height: 7px; border-radius: 50%; background: #585a5a; }
.ibeam { position: absolute; left: 983px; top: 845px; width: 14px; height: 32px; }
.scroll-track {
  position: absolute;
  left: 3072px;
  top: 635px;
  width: 6px;
  height: 779px;
  background: #dedede;
}
.scroll-mark { position: absolute; left: 0; top: 637px; width: 6px; height: 61px; background: #1fb573; }

/* dock */
.dock {
  position: absolute;
  z-index: 3;
  left: 932px;
  top: 2142px;
  width: 1684px;
  height: 130px;
  border-radius: 30px;
  background: #bdd0de;
  border-top: 2px solid #47596a;
  box-shadow: 0 -8px 40px rgba(0,0,0,.16);
  display: flex;
  align-items: flex-start;
  padding: 14px 0 0 18px;
  gap: 22.500px;
}
.dock-icon { width: 68px; height: 68px; }
.dock-text { font-family: "Liberation Sans", "Noto Sans CJK SC", sans-serif; }
.dock-text.strong { font-weight: 700; }
.dock-sep { width: 2px; height: 70px; background: #8a9aa8; margin-left: 10px; margin-right: 4px; }
.dock-doc { width: 68px; height: 76px; margin-top: -6px; margin-right: 2px; }
```
